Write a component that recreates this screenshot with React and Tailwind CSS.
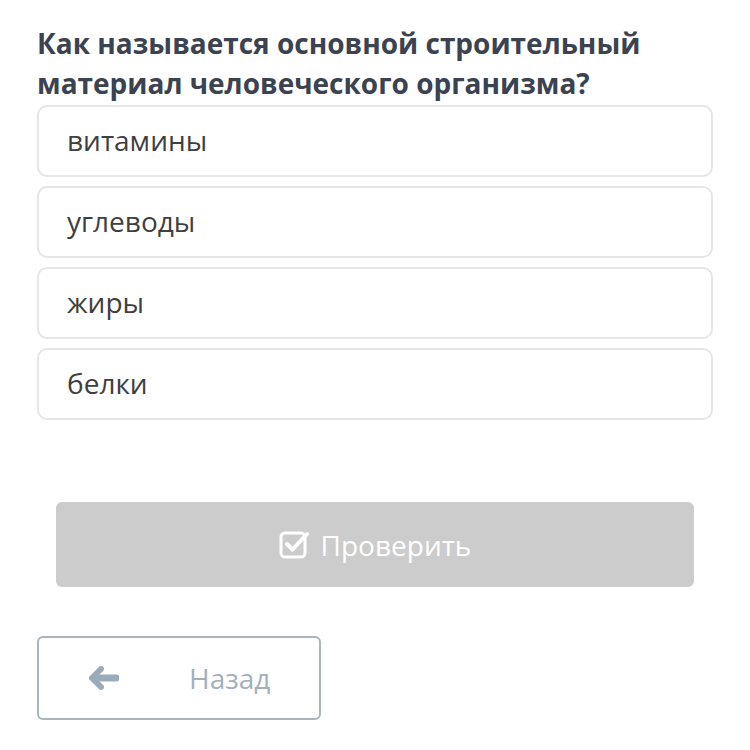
import React from "react";

function Option({ label }) {
  return (
    <div className="h-[72px] rounded-[10px] border-2 border-[#e6e6e6] bg-white flex items-center pl-[28px] pb-[3px] text-[28px] text-[#3f3f3f]">
      {label}
    </div>
  );
}

export default function App() {
  return (
    <div className="w-[750px] h-[750px] bg-white overflow-hidden" style={{ fontFamily: '"Open Sans", sans-serif' }}>
      <div className="pl-[37px] pr-[37px] pt-[23px]">
        <h1 className="text-[28px] leading-[40px] font-bold text-[#3b4250]">
          Как называется основной строительный материал человеческого организма?
        </h1>
        <div className="mt-[2px] flex flex-col gap-[9px]">
          <Option label="витамины" />
          <Option label="углеводы" />
          <Option label="жиры" />
          <Option label="белки" />
        </div>
        <div className="mt-[82px] mx-[19px] h-[85px] rounded-[6px] bg-[#cccccc] flex items-center justify-center gap-[12px] text-white text-[28px]">
          <svg width="30" height="30" viewBox="0 0 30 30" fill="none">
            <rect x="2" y="3" width="24" height="24" rx="4" stroke="white" strokeWidth="3" />
            <path d="M8 14 L13.5 19.5 L28 4" stroke="white" strokeWidth="4" strokeLinecap="round" strokeLinejoin="round" />
          </svg>
          <span>Проверить</span>
        </div>
        <div className="mt-[49px] w-[284px] h-[84px] rounded-[6px] border-2 border-[#aab4bd] flex items-center">
          <svg className="ml-[50px]" width="30" height="24" viewBox="0 0 30 24">
            <path d="M12 3 L3 12 L12 21" fill="none" stroke="#9aabb9" strokeWidth="6" strokeLinecap="round" strokeLinejoin="round" />
            <path d="M5 12 L27 12" stroke="#9aabb9" strokeWidth="7" strokeLinecap="round" />
          </svg>
          <span className="ml-[70px] text-[28px] text-[#a3b0bb]">Назад</span>
        </div>
      </div>
    </div>
  );
}
